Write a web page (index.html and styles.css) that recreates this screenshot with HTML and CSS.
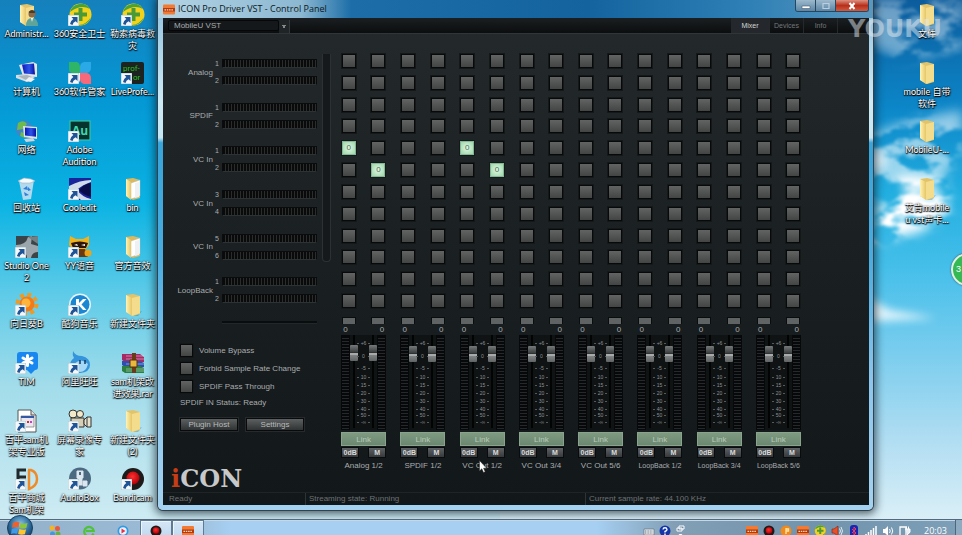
FILE: index.html
```html
<!DOCTYPE html>
<html lang="zh-CN">
<head>
<meta charset="utf-8">
<title>ICON Pro Driver VST - Control Panel</title>
<link rel="stylesheet" href="styles.css">
</head>
<body>
<svg width="0" height="0" class="defs" aria-hidden="true">
  <defs>
    <linearGradient id="paper" x1="0" x2="1"><stop offset="0" stop-color="#fff3b4"/><stop offset="1" stop-color="#e6c667"/></linearGradient>
    <linearGradient id="screen" x1="0" x2="1"><stop offset="0" stop-color="#0a18b8"/><stop offset=".55" stop-color="#2f55e8"/><stop offset="1" stop-color="#0610a0"/></linearGradient>
    <radialGradient id="orb" cx=".5" cy=".35" r=".65"><stop offset="0" stop-color="#8fc6e8"/><stop offset=".6" stop-color="#2d6b9c"/><stop offset="1" stop-color="#123a5c"/></radialGradient>
    <radialGradient id="redball" cx=".45" cy=".4" r=".6"><stop offset="0" stop-color="#ff3030"/><stop offset="1" stop-color="#b00008"/></radialGradient>
  </defs>
  <symbol id="arrow" viewBox="0 0 11 11"><path d="M0 0h11v11H0z" fill="#f4f8fc" stroke="#8aa" stroke-width=".6"/><path d="M3.500 2h6v6L7.600 6.200Q5 7.500 4.500 10L2 9Q2.300 5.800 5.300 3.900z" fill="#1f5596"/></symbol>
  <symbol id="folder" viewBox="0 0 24 24"><path d="M15 20l6-2-4 5-5 0z" fill="#2b6f86" opacity=".35"/><path d="M5 2l7-1 7 2v18l-7 2-7-4z" fill="#e2c36a"/><path d="M11 5l8-2v17l-8 3z" fill="#f3dc8c"/><path d="M5 2l6 3v18l-6-4z" fill="url(#paper)"/></symbol>
  <symbol id="folder-full" viewBox="0 0 24 24"><path d="M5 2l7-1 7 2v18l-7 2-7-4z" fill="#dcb95e"/><path d="M10 6l9-3v16l-9 3z" fill="#fff" stroke="#b9b9a8" stroke-width=".5"/><path d="M14 6l4-1v15l-4 1z" fill="#edf1f3"/><path d="M5 2l5 3v18l-5-4z" fill="url(#paper)"/></symbol>
  <symbol id="user" viewBox="0 0 24 24"><use href="#folder"/><circle cx="17" cy="11" r="3.500" fill="#8a6a4a"/><path d="M13.500 9q3.500-4 7 0l-1 1h-5z" fill="#4c3a28"/><path d="M11 23q0-8 6-8t6 8z" fill="#5fa49a"/><path d="M16 15h2l-1 4z" fill="#fff"/></symbol>
  <symbol id="guard" viewBox="0 0 24 24"><circle cx="12.500" cy="11.500" r="11" fill="#f4d21c"/><path d="M2 9a11 11 0 0 1 20-3q-9-5-20 3z" fill="#4aa23a"/><path d="M23 14a11 11 0 0 1-12 8q8-1 12-8z" fill="#4aa23a"/><path d="M10.500 5h4v4.500H19v4h-4.500V18h-4v-4.500H6v-4h4.500z" fill="#4b9a35"/></symbol>
  <symbol id="computer" viewBox="0 0 24 24"><path d="M4 4l14-3 4 2v13l-14-1z" fill="#e4e6ea"/><path d="M7 3.500l12-1 1 11-11-1z" fill="url(#screen)"/><path d="M1 14l11-1 8 3-8 5-11-4z" fill="#d7dce0"/><path d="M3 15l9-1 5 2-6 3z" fill="#a9b4bd"/><path d="M14 16l6 2-4 3-6-1z" fill="#eef1f3"/></symbol>
  <symbol id="network" viewBox="0 0 24 24"><circle cx="9" cy="10" r="8.500" fill="#3f86c8"/><path d="M3 4q6-4 9 1l-4 5-6 1zM6 13l6 2-2 4-5-2z" fill="#6fba4c"/><path d="M8 7l14 1v12l-13-2z" fill="#dfe3e8"/><path d="M10 8.500l11 .7v8.600l-11-1.300z" fill="url(#screen)"/><path d="M9 20l9-1 2 3-9 1z" fill="#cfd5da"/></symbol>
  <symbol id="manager" viewBox="0 0 24 24"><path d="M1 1h8q3 1 3 5v6H5q-4 0-4-4z" fill="#2eb567"/><path d="M23 1h-7q-4 1-4 5v6h7q4-1 4-5z" fill="#2ba8e6"/><path d="M23 23h-7q-4-1-4-5v-6h7q4 1 4 5z" fill="#f5697a"/><path d="M1 23h7q4-1 4-5v-6H5q-4 1-4 5z" fill="#eef"/></symbol>
  <symbol id="prof" viewBox="0 0 24 24"><rect x="0" y="1" width="23" height="22" rx="2" fill="#1d2321"/></symbol>
  <symbol id="audition" viewBox="0 0 24 24"><rect x="2" y="2" width="20" height="19" fill="#06332e" stroke="#35c3a0" stroke-width="1.200"/></symbol>
  <symbol id="bin" viewBox="0 0 24 24"><path d="M4 4l15-1-3 19-8 1z" fill="#cfe2ee" opacity=".85"/><path d="M3 4l6-3 7 1 4 2-5 2-8 0z" fill="#f5fafd" stroke="#9fb4c4" stroke-width=".6"/><path d="M8 12l4-3 1 4zM9 15l5 3-4 1zM13 10l3 3-3 1z" fill="#2d7fdc"/></symbol>
  <symbol id="cool" viewBox="0 0 24 24"><path d="M1 1h22v22H1z" fill="#18249a"/><path d="M1 9Q12 3 23 3v2Q14 8 9 13q5 7 14 9v1H13Q6 17 1 15z" fill="#cfdbe8"/><path d="M11 13q5-6 12-7v14q-8-2-12-7z" fill="#080d48"/></symbol>
  <symbol id="studio" viewBox="0 0 24 24"><path d="M1 1h22v22H1z" fill="#3b4549"/><path d="M1 10q10 0 12-8l4-1-1 8 7 2v6q-6 0-7 6h-4q0-8-11-9z" fill="#9aa6ab"/><path d="M13 2l10-1v8z" fill="#727f84"/></symbol>
  <symbol id="yy" viewBox="0 0 24 24"><path d="M2 1l6 3h7l6-3v9l-4 5H6L1 10z" fill="#f3b21b"/><path d="M3 8q9-3 17 0l-2 5H5z" fill="#2c1607"/><path d="M6 10l3-1 1 2zM13 10l4-1v2z" fill="#fff"/><path d="M6 14h11l3 8H6z" fill="#6b3910"/><circle cx="20" cy="18" r="3.500" fill="#eba31a"/></symbol>
  <symbol id="sunny" viewBox="0 0 24 24"><circle cx="12" cy="11" r="9.500" fill="none" stroke="#f09a22" stroke-width="4" stroke-dasharray="4 3.460"/><circle cx="12" cy="11" r="7.500" fill="#f47b18"/><circle cx="11" cy="10" r="4.500" fill="#ffb43c"/></symbol>
  <symbol id="kugou" viewBox="0 0 24 24"><circle cx="12" cy="11.500" r="11" fill="#e6f4fc"/><circle cx="12" cy="11.500" r="9.500" fill="#1b86d2"/><path d="M8 6h3v4l4-4h3.500l-5 5.500 5 5.500H15l-4-4.500V17H8z" fill="#fff"/></symbol>
  <symbol id="tim" viewBox="0 0 24 24"><path d="M5 1h15q3 0 3 3v12q0 3-3 3l-4 4-4-4H5q-3 0-3-3V4q0-3 3-3z" fill="#1888f0"/><path d="M12.500 4.500v10M8 7l9 5M17 7l-9 5" stroke="#fff" stroke-width="3" stroke-linecap="round"/></symbol>
  <symbol id="wang" viewBox="0 0 24 24"><path d="M5 0q2 5 9 5 8 2 8 9t-10 8Q2 22 2 14q0-4 4-7Q4 4 5 0z" fill="#3494dc"/><path d="M6 13q7-7 14 0-2 8-8 8-5-1-6-8z" fill="#a5d8f6"/><path d="M12 9v4M17 9v4" stroke="#123c66" stroke-width="1.500"/></symbol>
  <symbol id="rar" viewBox="0 0 24 24"><path d="M1 3l18 0 4 3v5H4L1 9z" fill="#a62a63"/><path d="M1 10h18l4 2v4H4l-3-2z" fill="#2d4fb0"/><path d="M1 15h18l4 2v5H4l-3-2z" fill="#2c8040"/><path d="M5 5h18M5 8h18M5 13h18M5 18h18M5 20h18" stroke="#fff" stroke-width=".6" opacity=".7"/><path d="M11 2h4v20h-4z" fill="#6b3a16"/><path d="M9 9h7v7H9z" fill="#e8b93c" stroke="#5b3010"/></symbol>
  <symbol id="doc" viewBox="0 0 24 24"><path d="M3 1h13l5 5v17H3z" fill="#fff" stroke="#555"/><path d="M16 1v5h5" fill="#ddd" stroke="#555"/><path d="M6 7h13v11H6z" fill="#e8e8ee" stroke="#777" stroke-width=".7"/><path d="M6 7h13v2H6z" fill="#3457a8"/><path d="M9 12h2v2H9z" fill="#2a9940"/><path d="M12 12h2v2h-2z" fill="#d03030"/><path d="M15 12h2v2h-2z" fill="#d03ad0"/></symbol>
  <symbol id="camera" viewBox="0 0 24 24"><circle cx="5" cy="5" r="4" fill="#f3e9c8" stroke="#333"/><circle cx="12" cy="5" r="3.500" fill="#f3e9c8" stroke="#333"/><path d="M3 9h13v9H3z" fill="#d6cfb6" stroke="#333"/><path d="M16 11l3-3h4v10h-4l-3-3z" fill="#e8e2cc" stroke="#333"/><path d="M19 8v10" stroke="#333"/></symbol>
  <symbol id="sd" viewBox="0 0 24 24"><path d="M11 3H3v7h8M3 10v9h8" fill="none" stroke="#20282c" stroke-width="3"/><path d="M13 3h3q6 2 6 9t-8 10V3z" fill="none" stroke="#ee8a28" stroke-width="2.500"/></symbol>
  <symbol id="audiobox" viewBox="0 0 24 24"><circle cx="12" cy="11.500" r="11" fill="#4b6a82"/><path d="M9 4h6v7H9zM10 11v7h4v-7M15 14h4v5h-4z" fill="#dce6ee" stroke="#dce6ee"/><path d="M11 5h2v3h-2z" fill="#4b6a82"/></symbol>
  <symbol id="bandi" viewBox="0 0 24 24"><circle cx="12" cy="12" r="11" fill="#1d1a1a"/><circle cx="12" cy="11" r="6.500" fill="url(#redball)"/></symbol>
  <symbol id="icon-app" viewBox="0 0 12 10"><rect width="12" height="10" rx="1" fill="#f27a33"/><path d="M0 3.500h12v3.500H0z" fill="#b43a0c"/><path d="M1.500 5.300h9" stroke="#ffd9bd" stroke-width="1.200" stroke-dasharray="1.500 .8"/></symbol>
</svg>

<div class="desktop">
  <svg class="wallpaper" viewBox="0 0 962 535" preserveAspectRatio="none" aria-hidden="true">
    <defs>
      <linearGradient id="sky" x1="0" y1="0" x2="0" y2="1"><stop offset="0" stop-color="#1580bc"/><stop offset=".18" stop-color="#0497d4"/><stop offset=".38" stop-color="#0ab3e3"/><stop offset=".55" stop-color="#5ecbe8"/><stop offset=".72" stop-color="#a2dcea"/><stop offset="1" stop-color="#d3edf4"/></linearGradient>
      <linearGradient id="sky2" x1="0" y1="0" x2="0" y2="1"><stop offset="0" stop-color="#0c5c9c"/><stop offset=".2" stop-color="#0c86c8"/><stop offset=".36" stop-color="#22aee0"/><stop offset=".5" stop-color="#45bfea"/><stop offset=".66" stop-color="#7acdee"/><stop offset=".82" stop-color="#b0ddf2"/><stop offset="1" stop-color="#e2f3f8"/></linearGradient>
      <filter id="cloud" x="-30%" y="-30%" width="160%" height="160%">
        <feGaussianBlur in="SourceGraphic" stdDeviation="6" result="soft"/>
        <feTurbulence type="fractalNoise" baseFrequency=".03 .055" numOctaves="4" seed="8"/>
        <feColorMatrix values="0 0 0 0 1  0 0 0 0 1  0 0 0 0 1  5 0 0 0 -1.900"/>
        <feComposite in2="soft" operator="in"/>
        <feGaussianBlur stdDeviation="1"/>
      </filter>
      <filter id="soft" x="-20%" y="-60%" width="140%" height="220%"><feGaussianBlur stdDeviation="4"/></filter>
    </defs>
    <rect width="962" height="535" fill="url(#sky)"/>
    <rect x="500" width="462" height="535" fill="url(#sky2)"/>
    <g fill="#fff" filter="url(#cloud)">
      <path d="M860 0h102v50l-60 10-42-20z" opacity=".4"/>
      <path d="M860 140l50-20 52-10v40l-20 30-82 20z" opacity=".55"/>
      <path d="M900 176l45 6 5 30-30 20-50 12v-30l20-12z"/>
    </g>
    <path d="M900 180h34l10 18-16 18-20-8z" fill="#fff" opacity=".65" filter="url(#soft)"/>
    <path d="M866 152h18l4 14-22 6z" fill="#fff" opacity=".6" filter="url(#soft)"/>
    <path d="M866 296l24 14 46 8-70 4z" fill="#fff" opacity=".8" filter="url(#soft)"/>
  </svg>

  <ul class="shortcuts" id="shortcuts"></ul>
  <ul class="shortcuts side" id="side"></ul>

  <section class="window" aria-label="ICON Pro Driver VST - Control Panel">
    <header class="titlebar">
      <svg class="app-icon"><use href="#icon-app"/></svg>
      <h1>ICON Pro Driver VST - Control Panel</h1>
      <div class="caption">
        <button type="button" aria-label="Minimize"><svg viewBox="0 0 12 8"><path d="M2 4h8v2.500H2z" fill="#fff" stroke="#47586a" stroke-width=".6"/></svg></button>
        <button type="button" aria-label="Maximize"><svg viewBox="0 0 12 8"><path d="M3 1.500h6v5H3z" fill="none" stroke="#b9cfe0" stroke-width="1.200"/></svg></button>
        <button type="button" class="close" aria-label="Close"><svg viewBox="0 0 12 8"><path d="M3.500 1l5 6M8.500 1l-5 6" stroke="#fff" stroke-width="2"/></svg></button>
      </div>
    </header>

    <div class="client">
      <div class="toolbar">
        <select aria-label="Device"><option>MobileU VST</option></select>
        <span class="drop" aria-hidden="true"></span>
        <nav class="tabs">
          <button type="button" class="on">Mixer</button>
          <button type="button">Devices</button>
          <button type="button">Info</button>
        </nav>
      </div>

      <div class="mixer">
        <div class="left">
          <div class="inputs" id="inputs"></div>
          <div class="sliver"></div>
          <form class="options">
            <label><input type="checkbox">Volume Bypass</label>
            <label><input type="checkbox">Forbid Sample Rate Change</label>
            <label><input type="checkbox">SPDIF Pass Through</label>
            <p>SPDIF IN Status: Ready</p>
            <div class="actions">
              <button type="button">Plugin Host</button>
              <button type="button">Settings</button>
            </div>
          </form>
          <div class="logo"><span>i</span>CON</div>
        </div>
        <div class="right">
          <div class="matrix" id="matrix"></div>
          <div class="strips" id="strips"></div>
        </div>
      </div>

      <footer class="status">
        <span>Ready</span>
        <span>Streaming state: Running</span>
        <span>Current sample rate: 44.100 KHz</span>
      </footer>
    </div>
  </section>

  <div class="watermark">YOUKU</div>
  <div class="bubble">3</div>

  <footer class="taskbar">
    <button type="button" class="start" aria-label="Start">
      <svg viewBox="0 0 26 26"><circle cx="13" cy="13" r="12.500" fill="url(#orb)" stroke="#1a3f5e"/><path d="M6 8q3-2 6.500-.5l-1 5q-3-1.200-6.500.3z" fill="#f0602a"/><path d="M13.500 8q3 1.500 7 0l-1.200 5q-3.500 1.200-6.800-.2z" fill="#8cc63c"/><path d="M4.800 14q3-1.500 6.400-.3l-1.200 5q-3-1.200-6 .2z" fill="#3f9be8"/><path d="M12.300 14q3.500 1.400 6.800.2l-1.200 5q-3.500 1-6.800-.2z" fill="#fcc62c"/></svg>
    </button>
    <button type="button" class="task" aria-label="Documents"><svg viewBox="0 0 12 12"><circle cx="3" cy="3" r="2.500" fill="#f2b428"/><circle cx="8.500" cy="3.500" r="2.500" fill="#e85a3a"/><circle cx="3.500" cy="9" r="2.500" fill="#3c9be0"/><circle cx="9" cy="9" r="2.500" fill="#5cb548"/></svg></button>
    <button type="button" class="task" aria-label="Browser"><svg viewBox="0 0 12 12"><path d="M10.500 8.500A4.800 4.800 0 1 1 10.800 6H3" fill="none" stroke="#4fc23a" stroke-width="2.200"/></svg></button>
    <button type="button" class="task" aria-label="Player"><svg viewBox="0 0 12 12"><circle cx="6" cy="6" r="5.500" fill="#2f9be6"/><circle cx="6" cy="6" r="3.800" fill="#e8f4fd"/><path d="M4.500 3.500l4 2.500-4 2.500z" fill="#e8324a"/></svg></button>
    <button type="button" class="task open" aria-label="Bandicam"><svg viewBox="0 0 24 24"><use href="#bandi"/></svg></button>
    <button type="button" class="task open" aria-label="ICON Control Panel"><svg viewBox="0 0 12 10"><use href="#icon-app"/></svg></button>
    <div class="tray lang">
      <svg viewBox="0 0 12 12"><path d="M1 4h10v6H1z" fill="#e8edf1" stroke="#66737e" stroke-width=".7"/><path d="M2 6h8M2 8h8" stroke="#66737e" stroke-dasharray="1 .6"/></svg>
      <svg viewBox="0 0 12 12"><circle cx="6" cy="6" r="5.500" fill="#1436a8"/><path d="M4 4.500Q4.200 2.700 6 2.700T8 4.500Q8 5.700 6 6.500V7.500M6 8.500v1.500" fill="none" stroke="#fff" stroke-width="1.400"/></svg>
      <svg viewBox="0 0 12 12"><path d="M4 1h5v3H4zM2 3h5v3H2z" fill="#6d8ca5" stroke="#fff"/><path d="M3.500 9h4l-2 2z" fill="#fff"/></svg>
    </div>
    <div class="tray">
      <svg viewBox="0 0 12 10"><use href="#icon-app"/></svg>
      <svg viewBox="0 0 24 24"><use href="#bandi"/></svg>
      <svg viewBox="0 0 12 12"><circle cx="6" cy="6" r="5.500" fill="#f08a1c"/><path d="M6 3v6M6 4h2.500v2H6" fill="none" stroke="#ffe5a8" stroke-width="1.300"/></svg>
      <svg viewBox="0 0 12 10"><use href="#icon-app"/></svg>
      <svg viewBox="0 0 24 24"><use href="#guard"/></svg>
      <svg viewBox="0 0 12 12"><path d="M1 4h2l4-3v10L3 8H1z" fill="#e8502a" stroke="#7c2412" stroke-width=".6"/><path d="M8.500 3.500q2 2.500 0 5M10 2q3 4 0 8" fill="none" stroke="#eef3f7" stroke-width=".9"/></svg>
      <svg viewBox="0 0 12 12"><rect x="2" y="0" width="8" height="12" rx="3" fill="#1328b4"/><path d="M4 4l4 4-2 2V2l2 2-4 4" fill="none" stroke="#f03a5a"/></svg>
      <svg viewBox="0 0 12 12"><path d="M1 11V9M3.500 11V7M6 11V5M8.500 11V3M11 11V1" stroke="#fff" stroke-width="1.500"/></svg>
      <svg viewBox="0 0 12 12"><path d="M1 4h2l3-3v10L3 8H1z" fill="#fff"/><path d="M7.500 4q1.500 2 0 4M9.500 2.500q2.500 3.500 0 7" fill="none" stroke="#fff"/></svg>
      <svg viewBox="0 0 12 12"><path d="M1 2h6v9H1z" fill="none" stroke="#fff" stroke-width="1.300"/><path d="M6 4h5v3q-1 2-2.500 2v2M7.500 1.500V4M9.500 1.500V4" fill="#e9eff4" stroke="#fff"/></svg>
    </div>
    <time>20:03</time>
    <span class="peek"></span>
  </footer>

  <svg class="pointer" viewBox="0 0 8 13" aria-hidden="true"><path d="M.5.500v10.500l2.300-2.200L4.500 12.500l1.700-.8L4.600 8.200h3z" fill="#fff" stroke="#222" stroke-width=".5"/></svg>
</div>
<script src="app.js"></script>
</body>
</html>
```
FILE: styles.css
```css
* { box-sizing: border-box; }

body {
  margin: 0;
  font-family: "Liberation Sans", "Noto Sans CJK SC", sans-serif;
  font-size: 8px;
}

button, select, input {
  font: inherit;
  color: inherit;
  margin: 0;
  padding: 0;
  border: 0;
  background: none;
}

ul, p, h1 { margin: 0; padding: 0; list-style: none; }

.defs { position: absolute; }

.desktop {
  position: relative;
  height: 100vh;
  overflow: hidden;
  display: flex;
  justify-content: space-between;
}

.wallpaper {
  position: absolute;
  width: 100%;
  height: 100%;
}

/* desktop shortcuts */
.shortcuts {
  position: relative;
  display: grid;
  grid-template-columns: repeat(3, 53px);
  grid-auto-rows: 58px;
  align-content: start;
  padding-top: 3px;
  color: #fff;
  font: 9px/12px Lato, "Noto Sans CJK SC", sans-serif;
  text-align: center;
  text-shadow: 0 1px 1px #000, 0 0 2px #000, 1px 1px 1px #123;
}

.side {
  grid-template-columns: 54px;
  margin-right: 8px;
}

.shortcuts li { white-space: nowrap; }

.shortcuts svg {
  display: block;
  width: 24px;
  height: 24px;
  margin: 0 auto 1px;
}

.shortcuts text { text-shadow: none; }
.shortcuts .green { font: 8px Roboto, sans-serif; fill: #27c21c; }
.shortcuts .teal { font: bold 12px "Open Sans", sans-serif; fill: #3fd6ac; }

/* window */
.window {
  position: absolute;
  inset: 0 89px 25px 158px;
  display: flex;
  flex-direction: column;
  padding: 0 4px 5px 5px;
  border-radius: 0 0 5px 5px;
  background: linear-gradient(#8fc0de, #cdeaf5 20%, #c4e6f4 27%, #38a4da 28%, #48ace0 50%, #8cc6ee 75%, #a4d2f0);
  box-shadow: 0 0 0 1px #33414c, 0 1px 9px 3px rgba(10, 25, 35, .65);
}

.titlebar {
  display: flex;
  align-items: center;
  gap: 3px;
  height: 18px;
  margin: 0 -4px 0 -5px;
  padding: 0 4px 0 5px;
  background: linear-gradient(90deg, #b4d4e4, #8cb8d2 20%, #1d6ea8 27%, #14639f 60%, #2d7fb5 82%, #5a97bf);
}

.titlebar h1 {
  flex: 1;
  font: 9px/16px "Open Sans", sans-serif;
  color: #0c1820;
}

.app-icon { width: 12px; height: 11px; }

.caption {
  display: flex;
  align-self: flex-start;
  border: 1px solid #27475f;
  border-top: 0;
  border-radius: 0 0 3px 3px;
  overflow: hidden;
}

.caption button {
  width: 20px;
  height: 11px;
  display: grid;
  place-items: center;
  background: linear-gradient(#9db9cc, #5c86a6);
  border-right: 1px solid #27475f;
}

.caption svg { width: 12px; height: 8px; }

.caption .close {
  width: 32px;
  border: 0;
  background: linear-gradient(#dd9080, #b8301c 50%, #cf5b40);
}

.client {
  flex: 1;
  display: flex;
  flex-direction: column;
  min-height: 0;
  background: linear-gradient(#242a2c, #1b2022 45%, #12171a);
  color: #a9adaf;
}

.toolbar {
  display: flex;
  height: 16px;
  background: linear-gradient(#1b1f21, #0b0d0e);
  border-bottom: 1px solid #303538;
}

.toolbar select {
  appearance: none;
  width: 111px;
  height: 11px;
  margin: 2px 0 0 5px;
  padding-left: 5px;
  border: 1px solid #060708;
  border-radius: 2px;
  background: #14181a;
  line-height: 9px;
}

.drop {
  width: 11px;
  margin-top: 2px;
  height: 13px;
  background: #1f2426 conic-gradient(from -30deg at 50% 100%, #85898b 60deg, transparent 0) center / 4px 4px no-repeat;
  border-right: 1px solid #33383a;
}

.tabs { display: flex; margin-left: auto; margin-right: 31px; color: #72777a; }
.tabs button { width: 34px; border-right: 1px solid #26292b; font-size: 7px; }
.tabs .on { width: 39px; background: #24282c; color: #d4d7d8; }

.mixer {
  flex: 1;
  display: grid;
  grid-template-columns: 171px 1fr;
  padding: 16px 61px 0 0;
}

.left { display: flex; flex-direction: column; }

.inputs {
  position: relative;
  display: grid;
  grid-template-rows: repeat(6, 1fr);
  height: 262px;
  padding-right: 17px;
}

.inputs::after {
  content: "";
  position: absolute;
  right: 3px;
  top: 4px;
  width: 7px;
  height: 207px;
  border: 1px solid #2c3234;
  border-top: 0;
  border-radius: 0 0 4px 4px;
  background: #15191b;
}

.input {
  display: grid;
  grid-template-columns: 50px 6px 98px;
  grid-template-rows: 9px 9px;
  gap: 8px 0;
  justify-content: end;
  padding-top: 9px;
  line-height: 9px;
}

.input b {
  grid-row: 1 / 3;
  align-self: center;
  text-align: right;
  font-weight: normal;
}

.input i { font-style: normal; font-size: 7px; text-align: right; }

.bar {
  margin-left: 3px;
  border: 1px solid #090b0c;
  border-bottom-color: #2d3335;
  background: repeating-linear-gradient(90deg, #080a0b 0 2px, #2c2d2b 2px 3px);
}

.sliver {
  height: 3px;
  margin: 9px 17px 0 59px;
  background: #0a0d0e;
  border-bottom: 1px solid #22282a;
}

.options {
  display: flex;
  flex-direction: column;
  gap: 5px;
  padding: 20px 0 0 17px;
  white-space: nowrap;
}

.options label { display: flex; align-items: center; gap: 6px; height: 13px; }

.options input {
  appearance: none;
  width: 13px;
  height: 13px;
}

.options input, .cell {
  border: 1px solid #07090a;
  background: linear-gradient(#626464, #434545);
  box-shadow: 0 0 0 1px #141819;
}

.options p { line-height: 10px; }

.actions { display: flex; gap: 8px; padding-top: 5px; }

.actions button {
  width: 58px;
  height: 13px;
  border: 1px solid #080a0b;
  background: linear-gradient(#5d6060, #303333);
  box-shadow: 0 0 0 1px #262a2c;
  color: #b8bbbc;
}

.logo {
  margin-top: auto;
  padding-left: 8px;
  font: bold 24px/26px "DejaVu Serif", serif;
  color: #c6c8c9;
}

.logo span { color: #c33d16; }

.matrix {
  display: grid;
  grid-template-columns: repeat(16, 1fr);
  grid-template-rows: repeat(12, 1fr);
  height: 262px;
  place-items: center;
}

.cell { width: 14px; height: 14px; line-height: 12px; text-align: center; }

.cell.on {
  border-color: #83b795;
  background: radial-gradient(#e2f8e4, #9cd6a8);
  color: #4c6a55;
}

.strips { display: grid; grid-template-columns: repeat(8, 1fr); padding-top: 5px; }

.strip {
  display: flex;
  flex-direction: column;
  align-items: center;
}

.peaks { align-self: stretch; display: grid; grid-template-columns: 1fr 1fr; justify-items: center; }
.peaks button { width: 14px; height: 7px; background: #606363; border: 1px solid #0a0d0e; border-bottom: 0; }

.gains { width: 41px; display: flex; justify-content: space-between; line-height: 11px; }

.faders {
  display: grid;
  grid-template-columns: 9px 8px 11px 8px 9px;
  height: 95px;
  background: #101314;
}

.level {
  border: 1px solid #060809;
  background: repeating-linear-gradient(#060809 0 2px, #25292b 2px 3px);
}

.faders input {
  appearance: none;
  writing-mode: vertical-lr;
  direction: rtl;
  width: 8px;
  height: 93px;
  background: linear-gradient(#020303, #020303) center / 2px 100% no-repeat;
}

.faders input::-webkit-slider-thumb {
  appearance: none;
  width: 8px;
  height: 16px;
  border-radius: 1px;
  background: linear-gradient(#777a7a, #3a3d3d 45%, #1d1f1f 50%, #d0d2d2 54%, #7f8282 65%, #606363);
}

.faders svg { width: 11px; height: 95px; overflow: visible; }
.faders text { font-size: 5px; fill: #8d9294; text-anchor: middle; }
.faders path { stroke: #555a5c; stroke-width: 1; }

.link {
  width: 45px;
  height: 14px;
  margin: 2px 0 1px;
  border: 1px solid #8aa38d;
  background: linear-gradient(#7e9b82, #6b8770);
  color: #b8cbb9;
}

.pair { width: 45px; display: flex; justify-content: space-between; }

.pair button {
  width: 18px;
  height: 11px;
  border: 1px solid #090b0c;
  background: linear-gradient(#5f6264, #36393b);
  color: #d8dada;
  font-size: 7px;
  line-height: 9px;
  font-weight: bold;
}

.strip .name { padding-top: 2px; line-height: 11px; white-space: nowrap; }
.strip .name.long { font-size: 7px; }

.status {
  display: grid;
  grid-template-columns: 142px 280px 1fr;
  line-height: 12px;
  border-top: 1px solid #1f2527;
  color: #6d7274;
}

.status span { padding-left: 3px; border-left: 1px solid #2e3436; }
.status span:first-child { padding-left: 6px; border: 0; }

/* overlays */
.watermark {
  position: absolute;
  top: 15px;
  right: 20px;
  font: bold 24px/28px "DejaVu Sans", sans-serif;
  color: rgba(225, 232, 238, .5);
}

.bubble {
  position: absolute;
  top: 253px;
  right: -22px;
  width: 33px;
  height: 33px;
  padding-left: 3px;
  border: 2px solid #dff2e2;
  border-radius: 50%;
  background: #35b955;
  box-shadow: 0 0 2px #345;
  color: #fff;
  font-size: 9px;
  line-height: 29px;
}

.pointer {
  position: absolute;
  left: 479px;
  top: 460px;
  width: 8px;
  height: 13px;
}

/* taskbar */
.taskbar {
  position: absolute;
  inset: auto 0 0;
  height: 16px;
  display: flex;
  background: linear-gradient(90deg, #92b0ca, #9dbdd8 20%, #a6cff2 24%, #a6cff2 62%, #829fb5 70%, #7193ac 85%, #7e9fb8);
  border-top: 1px solid #55697a;
  box-shadow: inset 0 1px #c3d9ea;
}

.taskbar svg { width: 12px; height: 12px; flex: none; }

.start { width: 38px; padding-left: 2px; height: 26px; margin-top: -5px; }
.taskbar .start svg { width: 26px; height: 26px; }

.task {
  width: 34px;
  height: 22px;
  display: grid;
  place-items: center;
}

.task.open {
  width: 32px;
  border: 1px solid #5f7b94;
  box-shadow: inset 1px 1px #eef6fd;
  background: linear-gradient(#d6e7f6, #b9d5ee);
}

.tray { display: flex; align-items: center; height: 22px; gap: 5px; padding-right: 13px; }
.tray.lang { margin-left: auto; gap: 4px; padding-right: 59px; }

time {
  width: 31px;
  color: #fff;
  font: 9px/22px "Open Sans", sans-serif;
}

.peek { width: 7px; border-left: 1px solid #4d677c; background: #8fabc1; }
```
FILE: app.js
```js
const lettering = {
  prof: '<text class="green" x="2" y="10">prof-</text><text class="green" x="12" y="19">or</text>',
  audition: '<text class="teal" x="4" y="16">Au</text>',
};

const picture = (id, linked) =>
  `<svg viewBox="0 0 24 24" aria-hidden="true"><use href="#${id}"/>${lettering[id] || ''}` +
  (linked ? '<use href="#arrow" x="0" y="12" width="11" height="11"/>' : '') + '</svg>';

const shortcut = ([icon, linked, label]) => `<li>${picture(icon, linked)}${label}</li>`;

const left = [
  ['user', 0, 'Administr...'], ['guard', 1, '360安全卫士'], ['guard', 1, '勒索病毒救<br>灾'],
  ['computer', 0, '计算机'], ['manager', 1, '360软件管家'], ['prof', 1, 'LiveProfe...'],
  ['network', 0, '网络'], ['audition', 1, 'Adobe<br>Audition'], null,
  ['bin', 0, '回收站'], ['cool', 1, 'Cooledit'], ['folder-full', 0, 'bin'],
  ['studio', 1, 'Studio One<br>2'], ['yy', 1, 'YY语音'], ['folder-full', 0, '官方音效'],
  ['sunny', 1, '向日葵B'], ['kugou', 1, '酷狗音乐'], ['folder', 0, '新建文件夹'],
  ['tim', 1, 'TIM'], ['wang', 1, '阿里旺旺'], ['rar', 0, 'sam机架改<br>进效果.rar'],
  ['doc', 1, '百平sam机<br>架专业版'], ['camera', 1, '屏幕录像专<br>家'], ['folder', 0, '新建文件夹<br>(2)'],
  ['sd', 1, '百平商城<br>Sam机架'], ['audiobox', 1, 'AudioBox'], ['bandi', 1, 'Bandicam'],
];
const side = [
  ['folder', 0, '文件'], ['folder', 0, 'mobile 自带<br>软件'],
  ['folder', 0, 'MobileU-...'], ['folder', 0, '艾肯mobile<br>u vst声卡...'],
];

const put = (id, html) => { document.getElementById(id).innerHTML = html; };

put('shortcuts', left.map(s => (s ? shortcut(s) : '<li></li>')).join(''));
put('side', side.map(shortcut).join(''));

const inputs = [['Analog', 1], ['SPDIF', 1], ['VC In', 1], ['VC In', 3], ['VC In', 5], ['LoopBack', 1]];
put('inputs', inputs.map(([name, n]) =>
  `<div class="input"><b>${name}</b><i>${n}</i><span class="bar"></span><i>${n + 1}</i><span class="bar"></span></div>`
).join(''));

const routed = new Set(['4-0', '4-4', '5-1', '5-5']);
let cells = '';
for (let row = 0; row < 12; row++) {
  for (let col = 0; col < 16; col++) {
    const on = routed.has(`${row}-${col}`);
    cells += `<button type="button" class="cell${on ? ' on' : ''}" aria-label="Input ${row + 1} to output ${col + 1}">${on ? 0 : ''}</button>`;
  }
}
put('matrix', cells);

const marks = [['+6', 8], ['0', 21], ['-5', 33], ['10', 42], ['15', 50], ['20', 58], ['30', 66], ['40', 74], ['50', 80], ['-∞', 87]];
const scale = '<svg viewBox="0 0 11 95">' + marks.map(([t, y]) =>
  `<path d="M-1 ${y}.500h2M10 ${y}.500h2"/><text x="5.500" y="${y + 2}">${t}</text>`).join('') + '</svg>';

const outputs = ['Analog 1/2', 'SPDIF 1/2', 'VC Out 1/2', 'VC Out 3/4', 'VC Out 5/6', 'LoopBack 1/2', 'LoopBack 3/4', 'LoopBack 5/6'];
put('strips', outputs.map((name, i) => {
  const value = i ? 86 : 87;
  const fader = side => `<input type="range" value="${value}" aria-label="${name} ${side}">`;
  return `<div class="strip">
    <div class="peaks"><button type="button" aria-label="${name} left"></button><button type="button" aria-label="${name} right"></button></div>
    <div class="gains"><span>0</span><span>0</span></div>
    <div class="faders"><span class="level"></span>${fader('left')}${scale}${fader('right')}<span class="level"></span></div>
    <button type="button" class="link">Link</button>
    <div class="pair"><button type="button">0dB</button><button type="button">M</button></div>
    <span class="name${name.startsWith('Loop') ? ' long' : ''}">${name}</span>
  </div>`;
}).join(''));
```
